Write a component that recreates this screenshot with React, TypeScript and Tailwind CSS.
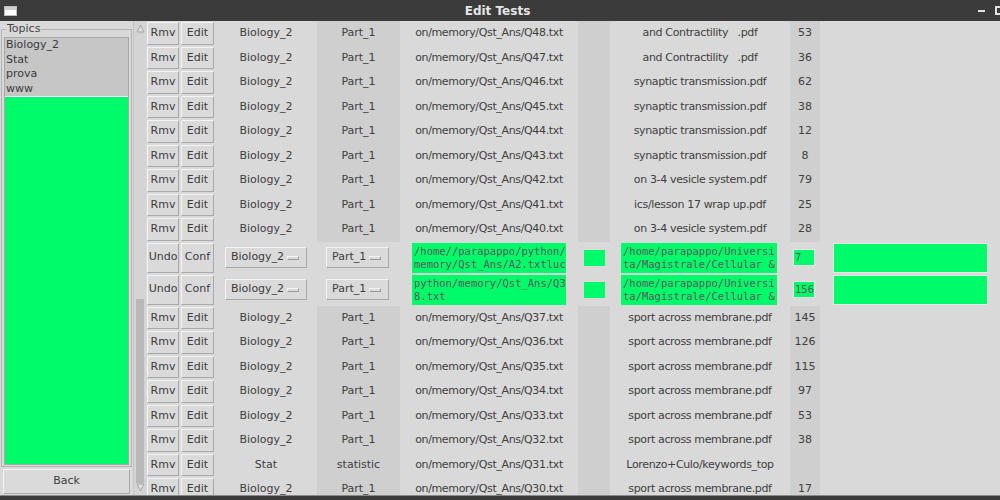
import type { ReactNode } from "react";

type Row = [string, string, string, string, string];

const TOP_ROWS: Row[] = [
  ["Biology_2", "Part_1", "on/memory/Qst_Ans/Q48.txt", "and Contractility   .pdf", "53"],
  ["Biology_2", "Part_1", "on/memory/Qst_Ans/Q47.txt", "and Contractility   .pdf", "36"],
  ["Biology_2", "Part_1", "on/memory/Qst_Ans/Q46.txt", "synaptic transmission.pdf", "62"],
  ["Biology_2", "Part_1", "on/memory/Qst_Ans/Q45.txt", "synaptic transmission.pdf", "38"],
  ["Biology_2", "Part_1", "on/memory/Qst_Ans/Q44.txt", "synaptic transmission.pdf", "12"],
  ["Biology_2", "Part_1", "on/memory/Qst_Ans/Q43.txt", "synaptic transmission.pdf", "8"],
  ["Biology_2", "Part_1", "on/memory/Qst_Ans/Q42.txt", "on 3-4 vesicle system.pdf", "79"],
  ["Biology_2", "Part_1", "on/memory/Qst_Ans/Q41.txt", "ics/lesson 17 wrap up.pdf", "25"],
  ["Biology_2", "Part_1", "on/memory/Qst_Ans/Q40.txt", "on 3-4 vesicle system.pdf", "28"],
];

const BOTTOM_ROWS: Row[] = [
  ["Biology_2", "Part_1", "on/memory/Qst_Ans/Q37.txt", "sport across membrane.pdf", "145"],
  ["Biology_2", "Part_1", "on/memory/Qst_Ans/Q36.txt", "sport across membrane.pdf", "126"],
  ["Biology_2", "Part_1", "on/memory/Qst_Ans/Q35.txt", "sport across membrane.pdf", "115"],
  ["Biology_2", "Part_1", "on/memory/Qst_Ans/Q34.txt", "sport across membrane.pdf", "97"],
  ["Biology_2", "Part_1", "on/memory/Qst_Ans/Q33.txt", "sport across membrane.pdf", "53"],
  ["Biology_2", "Part_1", "on/memory/Qst_Ans/Q32.txt", "sport across membrane.pdf", "38"],
  ["Stat", "statistic", "on/memory/Qst_Ans/Q31.txt", "Lorenzo+Culo/keywords_top", ""],
  ["Biology_2", "Part_1", "on/memory/Qst_Ans/Q30.txt", "sport across membrane.pdf", "17"],
];

const EDIT_ROWS = [
  {
    file: ["/home//parapappo/python/", "memory/Qst_Ans/A2.txtluc"],
    pdf: ["/home/parapappo/Universi", "ta/Magistrale/Cellular &"],
    page: "7",
  },
  {
    file: ["python/memory/Qst_Ans/Q3", "8.txt"],
    pdf: ["/home/parapappo/Universi", "ta/Magistrale/Cellular &"],
    page: "156",
  },
];

const raised =
  "border border-t-[#f4f4f4] border-l-[#f4f4f4] border-r-[#a9a9a9] border-b-[#a9a9a9] bg-[#dadada]";

function TkButton({ children, className = "" }: { children: ReactNode; className?: string }) {
  return (
    <div className={`flex items-center justify-center text-[11px] text-[#3c3c3c] ${raised} ${className}`}>
      {children}
    </div>
  );
}

function DataRow({ row }: { row: Row }) {
  const [topic, part, file, pdf, page] = row;
  return (
    <div className="flex h-[24.5px] shrink-0 text-[11px] text-[#404040]">
      <div className="flex w-[34px] p-px">
        <TkButton className="flex-1">Rmv</TkButton>
      </div>
      <div className="flex w-[35px] p-px">
        <TkButton className="flex-1">Edit</TkButton>
      </div>
      <div className="flex w-[102px] items-center justify-center">{topic}</div>
      <div className="flex w-[83px] items-center justify-center bg-[#cfcfcf]">{part}</div>
      <div className="flex w-[178px] items-center justify-center tracking-[-0.35px]">{file}</div>
      <div className="w-[32px] bg-[#cfcfcf]" />
      <div className="flex w-[180px] items-center justify-center whitespace-pre tracking-[-0.35px]">{pdf}</div>
      <div className="flex w-[30px] items-center justify-center bg-[#cfcfcf]">{page}</div>
      <div className="flex-1" />
    </div>
  );
}

function OptionMenu({ label, width }: { label: string; width: string }) {
  return (
    <div className={`flex h-[21px] items-center justify-between pl-[5px] pr-[7px] text-[11px] text-[#3c3c3c] ${raised} ${width}`}>
      <span>{label}</span>
      <span className="h-[4px] w-[12px] border border-t-[#f4f4f4] border-l-[#f4f4f4] border-r-[#9a9a9a] border-b-[#9a9a9a]" />
    </div>
  );
}

function GreenEntry({ lines, className = "" }: { lines: string[]; className?: string }) {
  return (
    <div
      className={`flex h-[30px] flex-col justify-center bg-[#00fb6a] px-[2px] font-['DejaVu_Sans_Mono',monospace] text-[10.5px] leading-[13px] whitespace-pre text-[#5a5a5a] ${className}`}
    >
      {lines.map((l) => (
        <span key={l}>{l}</span>
      ))}
    </div>
  );
}

function EditRow({ file, pdf, page }: { file: string[]; pdf: string[]; page: string }) {
  return (
    <div className="flex h-[32px] shrink-0 text-[11px] text-[#404040]">
      <div className="flex w-[34px] p-px">
        <TkButton className="flex-1">Undo</TkButton>
      </div>
      <div className="flex w-[35px] p-px">
        <TkButton className="flex-1">Conf</TkButton>
      </div>
      <div className="flex w-[102px] items-center pl-[10px]">
        <OptionMenu label="Biology_2" width="w-[82px]" />
      </div>
      <div className="flex w-[83px] items-center pl-[9px]">
        <OptionMenu label="Part_1" width="w-[63px]" />
      </div>
      <div className="flex w-[178px] items-center pl-[12px]">
        <GreenEntry lines={file} className="w-[154px]" />
      </div>
      <div className="flex w-[32px] items-center pl-[6px]">
        <div className="h-[16px] w-[21px] bg-[#00fb6a]" />
      </div>
      <div className="flex w-[180px] items-center pl-[11px]">
        <GreenEntry lines={pdf} className="w-[156px]" />
      </div>
      <div className="flex w-[30px] items-center pl-[3px]">
        <div className="flex h-[17px] w-[22px] items-center border border-[#eaeaea] bg-[#00fb6a] px-px font-['DejaVu_Sans_Mono',monospace] text-[10.5px] text-[#5a5a5a]">
          {page}
        </div>
      </div>
      <div className="flex flex-1 items-center pl-[13px]">
        <div className="h-[30px] w-[155px] border border-[#e6e6e6] bg-[#00fb6a]" />
      </div>
    </div>
  );
}

function Scrollbar() {
  return (
    <div className="flex w-[13px] flex-col border-l border-[#c4c4c4] bg-[#d4d4d4]">
      <div className="flex h-[12px] items-end justify-center">
        <svg width="9" height="9" viewBox="0 0 9 9">
          <path d="M4.5 1 L8 8 L1 8 Z" fill="#dedede" stroke="#a5a5a5" strokeWidth="1" />
        </svg>
      </div>
      <div className="flex flex-1 flex-col px-[2px]">
        <div className="h-[266px]" />
        <div className="flex-1 bg-[#b9b9b9]" />
      </div>
      <div className="flex h-[12px] items-start justify-center">
        <svg width="9" height="9" viewBox="0 0 9 9">
          <path d="M1 1 L8 1 L4.5 8 Z" fill="#dedede" stroke="#a5a5a5" strokeWidth="1" />
        </svg>
      </div>
    </div>
  );
}

function TopicsPanel() {
  return (
    <div className="flex w-[133px] flex-col">
      <fieldset className="mx-px mt-px flex min-h-0 flex-1 flex-col border border-[#b4b4b4] px-[2px] pb-[1px]">
        <legend className="ml-[2px] px-px text-[11px] leading-[14px] text-[#444]">Topics</legend>
        <div className="mt-[1px] flex flex-1 flex-col border border-[#a9a9a9]">
          <div className="flex flex-col bg-[#c6c6c6] text-[11px] leading-[14.5px] text-[#3a3a3a]">
            <span className="pl-[1px]">Biology_2</span>
            <span className="pl-[1px]">Stat</span>
            <span className="pl-[1px]">prova</span>
            <span className="pl-[1px]">www</span>
          </div>
          <div className="flex-1 border-t border-white bg-[#00fb6a]" />
        </div>
      </fieldset>
      <TkButton className="mx-[3px] mt-[2px] mb-px h-[25px]">Back</TkButton>
    </div>
  );
}

export default function App() {
  return (
    <div className="flex h-[500px] w-[1000px] flex-col overflow-hidden bg-[#d9d9d9] font-['DejaVu_Sans',sans-serif]">
      <div className="flex h-[21px] shrink-0 items-center justify-between bg-[#3b3b3b] px-[4px]">
        <div className="flex h-[10px] w-[13px] flex-col border border-[#bdbdbd] bg-white">
          <div className="h-[3px] bg-[#cfcfcf]" />
        </div>
        <span className="text-[12px] font-bold text-[#e6e6e6]">Edit Tests</span>
        <div className="flex items-center gap-[10px]">
          <span className="h-[2px] w-[7px] bg-[#e0e0e0]" />
          <span className="-mr-[8px] h-[9px] w-[9px] border-2 border-[#e0e0e0]" />
        </div>
      </div>
      <div className="flex min-h-0 flex-1">
        <TopicsPanel />
        <Scrollbar />
        <div className="flex min-w-0 flex-1 flex-col overflow-hidden">
          {TOP_ROWS.map((r, i) => (
            <DataRow key={`t${i}`} row={r} />
          ))}
          {EDIT_ROWS.map((e, i) => (
            <EditRow key={`e${i}`} {...e} />
          ))}
          {BOTTOM_ROWS.map((r, i) => (
            <DataRow key={`b${i}`} row={r} />
          ))}
        </div>
      </div>
      <div className="h-[5px] shrink-0 border-t border-[#8a8a8a] bg-[#3b3b3b]" />
    </div>
  );
}
